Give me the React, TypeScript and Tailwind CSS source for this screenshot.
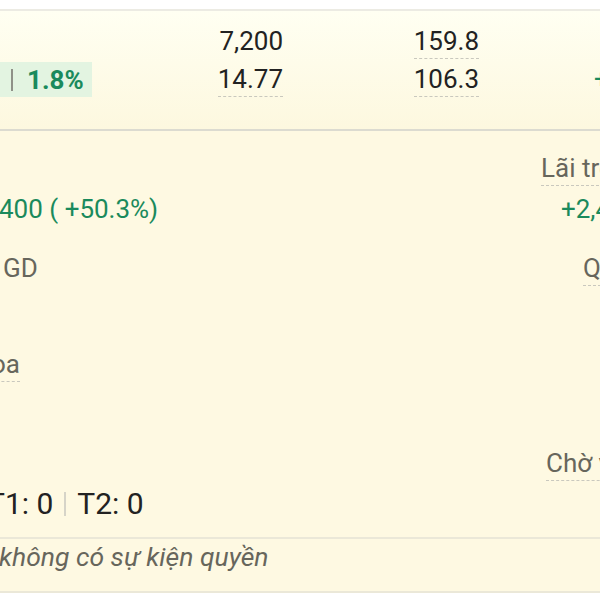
import React from 'react';

// Cropped view of a stock position card (values clipped at both edges)
const dash = 'inline-block h-[35px] border-b border-dashed border-[#c9c8be]';

export default function App() {
    return (
        <div className="w-[600px] h-[600px] overflow-hidden bg-white font-['Roboto','Liberation_Sans',sans-serif] text-[26px] leading-[34px] text-[#222222] whitespace-nowrap">
            <div className="h-[9px] bg-white" />

            {/* Summary rows */}
            <div className="border-t-2 border-[#ecebe3] bg-linear-to-b from-[#fffff2] to-[#fdf8df] pt-[13px] pb-[32px]">
                <div className="flex h-[35px]">
                    <div className="w-[283px] shrink-0 text-right">7,200</div>
                    <div className="w-[196px] shrink-0 text-right">
                        <span className={dash}>159.8</span>
                    </div>
                </div>
                <div className="mt-[3px] flex h-[35px]">
                    <div className="w-[283px] shrink-0 flex justify-between">
                        <div className="flex items-center bg-[#e3f4e1] pl-[11px] pr-[8px]">
                            <span className="w-[2px] h-[22px] bg-[#8f9188]" />
                            <span className="ml-[14px] font-bold text-[#1a8a5c]">1.8%</span>
                        </div>
                        <span className={dash}>14.77</span>
                    </div>
                    <div className="w-[196px] shrink-0 text-right">
                        <span className={dash}>106.3</span>
                    </div>
                    <div className="pl-[115px] text-[#1a8a5c]">+2,400</div>
                </div>
            </div>

            {/* Detail grid */}
            <div className="border-t-2 border-[#dcdbd0] bg-[#fef9e2] pt-[20px] pb-[16px]">
                <div className="flex h-[35px]">
                    <div className="w-[541px] shrink-0" />
                    <span className={`${dash} text-[#67665c]`}>Lãi trong ngày</span>
                </div>
                <div className="mt-[6px] flex h-[35px] text-[#1a8a5c]">
                    <div className="w-[541px] shrink-0 -ml-[1px]">400 ( +50.3%)</div>
                    <div className="pl-[21px]">+2,400</div>
                </div>
                <div className="mt-[24px] flex h-[35px] text-[#67665c]">
                    <div className="w-[541px] shrink-0 pl-[3px]">GD</div>
                    <div className="pl-[42px]">
                        <span className={dash}>Quyền</span>
                    </div>
                </div>
                <div className="mt-[61px] flex h-[35px] text-[#67665c]">
                    <span className={`${dash} -ml-[9px]`}>oa</span>
                </div>
                <div className="mt-[64px] flex h-[35px]">
                    <div className="w-[546px] shrink-0" />
                    <span className={`${dash} text-[#67665c]`}>Chờ về</span>
                </div>
                <div className="mt-[5px] flex items-center h-[35px] text-[30px]">
                    <span className="-ml-[13px]">T1: 0</span>
                    <span className="mx-[11px] w-[2px] h-[24px] bg-[#d6d4c8]" />
                    <span>T2: 0</span>
                </div>
            </div>

            {/* Rights events */}
            <div className="border-t-2 border-b-2 border-[#ebe8d8] bg-[#fef9e2] pt-[1px] pb-[17px]">
                <div className="-ml-[1px] italic text-[26.5px] text-[#67665c]">không có sự kiện quyền</div>
            </div>
        </div>
    );
}
